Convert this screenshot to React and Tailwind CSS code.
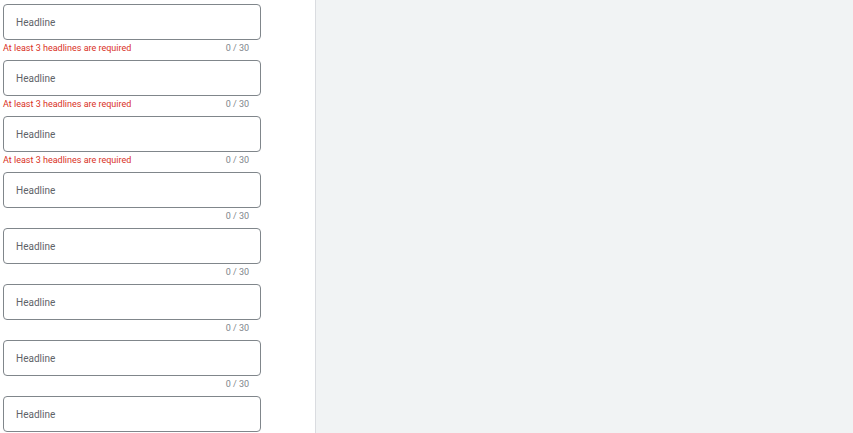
import React from "react";

const items = [true, true, true, false, false, false, false, null];

export default function App() {
  return (
    <div className="flex w-[853px] h-[433px] overflow-hidden bg-[#f1f3f4]" style={{ fontFamily: "Roboto, 'Liberation Sans', sans-serif" }}>
      <div className="w-[316px] h-full bg-white border-r border-[#dadce0] pl-[3px] pt-[4px] flex flex-col shrink-0">
        {items.map((err, i) => (
          <div key={i} className="flex flex-col w-[258px]">
            <div className="h-[36px] w-[258px] border border-[#80868b] rounded-[4px] flex items-center pl-[12px] text-[10px] text-[#5f6368]">
              Headline
            </div>
            {err !== null && (
              <div className="h-[20px] flex items-start pt-[2px] justify-between pr-[12px] text-[9px] leading-[12px]">
                <span className="text-[#d93025]">{err ? "At least 3 headlines are required" : ""}</span>
                <span className="text-[#80868b]">0 / 30</span>
              </div>
            )}
          </div>
        ))}
      </div>
      <div className="flex-1" />
    </div>
  );
}
